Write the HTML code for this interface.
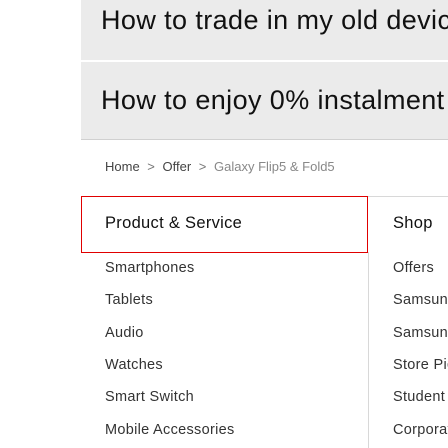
<!DOCTYPE html>
<html><head><style>
body{margin:0;width:448px;height:448px;overflow:hidden;background:#fff;font-family:"Liberation Sans",sans-serif;position:relative}
.box{position:absolute;left:81px;width:367px;background:#ebebeb}
.t{position:absolute;left:101px;font-size:27px;color:#111;white-space:nowrap;letter-spacing:0.4px}
.a{position:absolute;font-size:14.5px;color:#333;white-space:nowrap;letter-spacing:0.3px}
</style></head><body>
<div class="box" style="top:0;height:60px"></div>
<div class="box" style="top:62px;height:77px;border-bottom:1px solid #d0d0d0"></div>
<div class="t" style="top:5px">How to trade in my old devic</div>
<div class="t" style="top:85px">How to enjoy 0% instalment</div>
<div class="a" style="left:105px;top:159px;font-size:13px;letter-spacing:0;color:#444">Home <span style="color:#777;margin:0 4px">&gt;</span> Offer <span style="color:#777;margin:0 4px">&gt;</span> <span style="color:#888">Galaxy Flip5 &amp; Fold5</span></div>
<div style="position:absolute;left:81px;top:196px;width:285px;height:55px;border:1px solid #e00000"></div>
<div style="position:absolute;left:368px;top:196px;width:80px;height:1px;background:#d8d8d8"></div>
<div style="position:absolute;left:368px;top:252px;width:1px;height:196px;background:#d8d8d8"></div>
<div class="a" style="left:105px;top:214px;font-size:16.5px;color:#111">Product &amp; Service</div>
<div class="a" style="left:393px;top:214px;font-size:16.5px;color:#111">Shop</div>
<div class="a" style="left:105px;top:260px">Smartphones</div>
<div class="a" style="left:105px;top:292px">Tablets</div>
<div class="a" style="left:105px;top:325px">Audio</div>
<div class="a" style="left:105px;top:357px">Watches</div>
<div class="a" style="left:105px;top:389px">Smart Switch</div>
<div class="a" style="left:105px;top:422px">Mobile Accessories</div>
<div class="a" style="left:393px;top:260px">Offers</div>
<div class="a" style="left:393px;top:292px">Samsung</div>
<div class="a" style="left:393px;top:325px">Samsung</div>
<div class="a" style="left:393px;top:357px">Store Pic</div>
<div class="a" style="left:393px;top:389px">Student</div>
<div class="a" style="left:393px;top:422px">Corporat</div>
</body></html>
